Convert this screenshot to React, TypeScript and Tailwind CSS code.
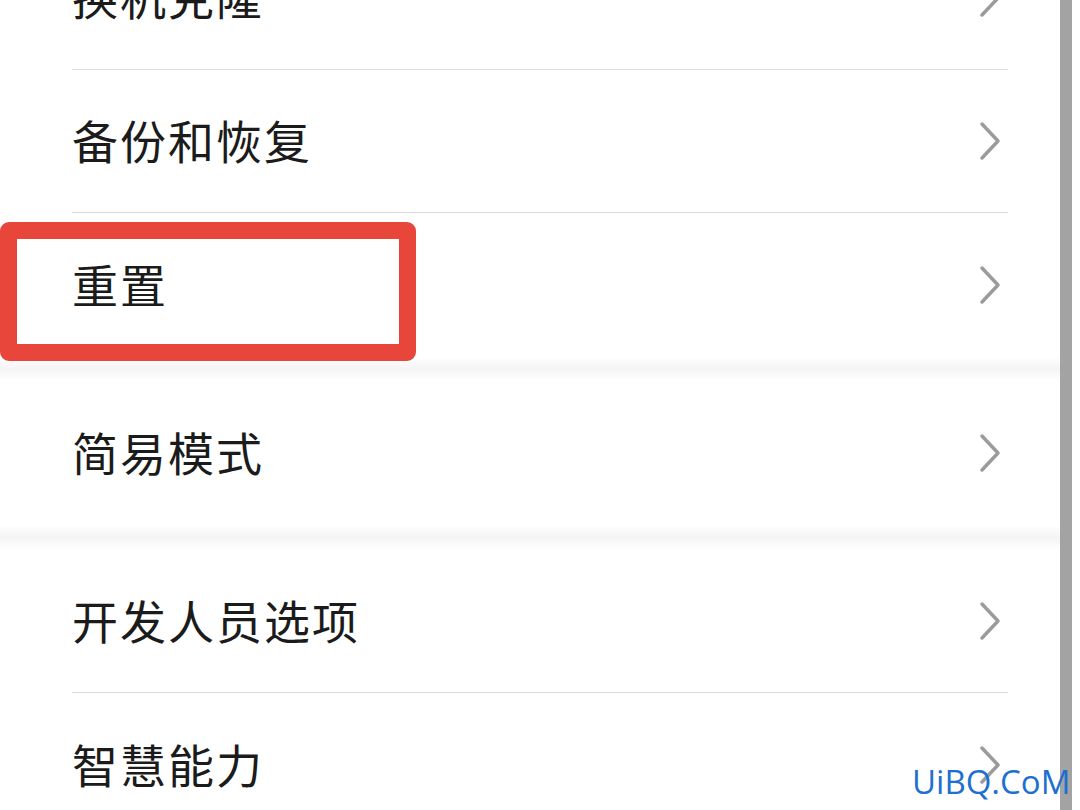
import React from 'react';

const Chevron = () => (
  <svg width="24" height="40" viewBox="0 0 24 40" fill="none" className="shrink-0">
    <polyline points="4,3 20,20 4,37" stroke="#9b9b9b" strokeWidth="3.5" strokeLinecap="round" strokeLinejoin="round" />
  </svg>
);

function Row({ label, border = false, className = '' }: { label: string; border?: boolean; className?: string }) {
  return (
    <div className={`flex items-center justify-between pr-[6px] ${border ? 'border-b-[1.5px] border-[#dcdcdc]' : ''} ${className}`}>
      <span className="mb-[5px] text-[46px] leading-none text-[#1b1b1b] tracking-[2px]">{label}</span>
      <Chevron />
    </div>
  );
}

const Band = ({ h }: { h: string }) => (
  <div className={`${h} w-full bg-gradient-to-b from-white via-[#f4f4f4] to-white`} />
);

function App() {
  return (
    <div
      className="relative w-[1080px] h-[810px] overflow-hidden bg-white"
      style={{ fontFamily: '"Noto Sans CJK SC", "Noto Sans", sans-serif' }}
    >
      <div className="mt-[-74px] w-[1060px]">
        <div className="pl-[72px] pr-[52px]">
          <Row label="换机克隆" border className="h-[144px]" />
          <Row label="备份和恢复" border className="h-[143px]" />
          <Row label="重置" className="h-[144px]" />
        </div>
        <Band h="h-[24px]" />
        <div className="pl-[72px] pr-[52px]">
          <Row label="简易模式" className="h-[144px]" />
        </div>
        <Band h="h-[25px]" />
        <div className="pl-[72px] pr-[52px]">
          <Row label="开发人员选项" border className="h-[143px]" />
          <Row label="智慧能力" className="h-[144px]" />
        </div>
      </div>

      {/* scrollbar */}
      <div className="absolute top-0 left-[1060px] w-[12px] h-full bg-[#a3a3a3]" />

      {/* highlight box */}
      <div className="absolute left-0 top-[222px] w-[416px] h-[139px] border-[17px] border-[#e8463a] rounded-[9px]" />

      {/* watermark */}
      <div
        className="absolute left-[912px] top-[765px] text-[33px] leading-none text-[#1d6fd1]"
        style={{ fontFamily: '"Open Sans", "Liberation Sans", sans-serif' }}
      >
        UiBQ.CoM
      </div>
    </div>
  );
}

export default App;
